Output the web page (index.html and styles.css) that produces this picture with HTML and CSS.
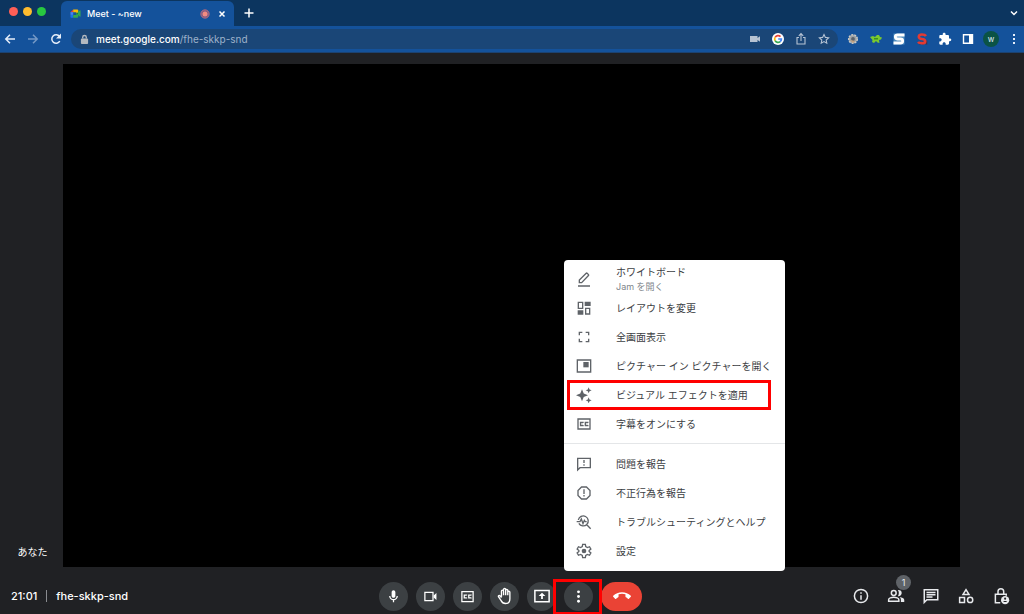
FILE: index.html
```html
<!DOCTYPE html>
<html lang="ja">
<head>
<meta charset="utf-8">
<title>Meet - ~new</title>
<link rel="stylesheet" href="styles.css">
</head>
<body>
<header class="browser">
  <div class="tabstrip">
    <div class="lights">
      <button class="light light-close" aria-label="閉じる"></button>
      <button class="light light-min" aria-label="最小化"></button>
      <button class="light light-max" aria-label="最大化"></button>
    </div>
    <div class="tab">
      <svg class="favicon" viewBox="0 0 24 24"><path fill="#00832d" d="M13.5 12l3 3.5 4 2.500V6l-4 2.500z"/><path fill="#1a73e8" d="M1 15v4.500A1.500 1.500 0 0 0 2.500 21H7l1-3-1-3z"/><path fill="#ea4335" d="M7 3L1 9h6z"/><path fill="#4285f4" d="M1 9h6v6H1z"/><path fill="#34a853" d="M7 15v6h9a2 2 0 0 0 2-2v-4l-4-3v3z"/><path fill="#fbbc04" d="M7 3v6h7v3l4-3V5a2 2 0 0 0-2-2z"/><path fill="#34a853" d="M17 9l5-4a.8.8 0 0 1 1 .8v12.400a.8.8 0 0 1-1 .8l-5-4z"/></svg>
      <span class="tab-title">Meet - ~new</span>
      <svg class="rec" viewBox="0 0 12 12"><circle cx="6" cy="6" r="5" fill="#7d5a82" stroke="#c66f80"/><circle cx="6" cy="6" r="3" fill="#f28b82"/></svg>
      <button class="tab-close" aria-label="タブを閉じる"><svg viewBox="0 0 8 8"><path class="line" d="M1.500 1.500l5 5m0-5l-5 5"/></svg></button>
    </div>
    <button class="new-tab" aria-label="新しいタブ"><svg viewBox="0 0 10 10"><path class="line" d="M5 .5v9M.5 5h9"/></svg></button>
    <button class="tab-search" aria-label="タブを検索"><svg viewBox="0 0 8 8"><path class="line" d="M1 2.500l3 3 3-3"/></svg></button>
  </div>
  <div class="toolbar">
    <button class="tool" aria-label="戻る"><svg viewBox="0 0 16 16"><path class="line" d="M13 8H4m4-4.200L3.800 8 8 12.200"/></svg></button>
    <button class="tool tool-off" aria-label="進む"><svg viewBox="0 0 16 16"><path class="line" d="M3 8h9M8 3.800L12.200 8 8 12.200"/></svg></button>
    <button class="tool" aria-label="再読み込み"><svg viewBox="0 0 16 16"><path class="line" d="M11.800 10.200A4.300 4.300 0 1 1 11.500 5.300"/><path fill="currentColor" d="M13 2.500v5H8z"/></svg></button>
    <div class="omnibox">
      <svg class="lock" viewBox="0 0 10 12"><rect x="1" y="5" width="8" height="6" rx="1" fill="currentColor"/><path class="line" d="M3 5V3.500a2 2 0 0 1 4 0V5"/></svg>
      <span class="url" role="textbox" aria-label="アドレス"><b class="host">meet.google.com</b>/fhe-skkp-snd</span>
      <button class="tool tool-soft" aria-label="カメラ"><svg viewBox="0 0 16 16"><path fill="currentColor" d="M3 5h7.500v2L13 5.300v5.400L10.500 9v2H3z"/></svg></button>
      <button class="tool" aria-label="Google"><svg viewBox="0 0 16 16"><circle cx="8" cy="8" r="6" fill="#fff"/><g fill="none" stroke-width="1.700"><path stroke="#ea4335" d="M5.100 6.300A3.400 3.400 0 0 1 10.500 5.600"/><path stroke="#fbbc04" d="M5.100 6.300a3.400 3.400 0 0 0 0 3.400"/><path stroke="#34a853" d="M5.100 9.700a3.400 3.400 0 0 0 5.100 1"/><path stroke="#4285f4" d="M10.200 10.700A3.400 3.400 0 0 0 11.400 8H8.200"/></g></svg></button>
      <button class="tool tool-soft" aria-label="共有"><svg viewBox="0 0 16 16"><path class="line thin" d="M6 6.500H4v6.500h8V6.500h-2M8 10V2.800M5.800 4.800L8 2.600l2.200 2.200"/></svg></button>
      <button class="tool tool-soft" aria-label="ブックマーク"><svg viewBox="0 0 16 16"><path class="line thin" d="M8 3.500l1.400 2.900 3.200.4-2.400 2.200.6 3.200L8 10.600l-2.800 1.600.6-3.200-2.400-2.200 3.200-.4z"/></svg></button>
    </div>
    <button class="tool" aria-label="拡張機能 1"><svg viewBox="0 0 16 16"><circle cx="8" cy="8" r="4.300" fill="#9da3a8" stroke="#c9c8c4" stroke-width="1.500" stroke-dasharray="2 1"/><circle cx="8" cy="8" r="1.900" fill="#59616a"/><path fill="#c7a17c" d="M5 9l3 3 2-2z"/></svg></button>
    <button class="tool" aria-label="拡張機能 2"><svg viewBox="0 0 16 16"><path fill="#7ac92f" d="M2 6l3-1 2 1 2-2h2l1 2 2 .5-1 2-2 .5.500 3-2-.5-1.500-1.500L6 12l-2-1 .5-2z"/><path fill="#3b8f22" d="M6 7h4v1.500H6z"/></svg></button>
    <button class="tool" aria-label="拡張機能 3"><svg viewBox="0 0 16 16"><rect x="2.500" y="2.500" width="11" height="11" fill="#4f8dbf"/><path fill="none" stroke="#fff" stroke-width="2.800" d="M13.500 4H6.500Q4.300 4 4.300 5.800T6.500 8h3q2.200 0 2.200 2T9.500 12H2.500"/></svg></button>
    <button class="tool" aria-label="拡張機能 4"><svg viewBox="0 0 16 16"><path stroke="#512d43" stroke-width="1.500" d="M6 13.500v-3m3 3.500v-3.500m3.500 3v-4"/><path fill="none" stroke="#e33a32" stroke-width="2.600" d="M12 5Q11 3.500 8 3.500T4.800 5.600 8 8t3.200 2.300T8 12.300 4 11"/></svg></button>
    <button class="tool tool-white" aria-label="拡張機能"><svg viewBox="-2 -2 28 28"><path fill="currentColor" d="M20.500 11H19V7c0-1.100-.9-2-2-2h-4V3.500C13 2.120 11.880 1 10.500 1S8 2.120 8 3.500V5H4c-1.100 0-1.990.9-1.990 2v3.800H3.500c1.490 0 2.700 1.210 2.700 2.700s-1.210 2.700-2.700 2.700H2V20c0 1.100.9 2 2 2h3.800v-1.500c0-1.490 1.210-2.700 2.700-2.700 1.490 0 2.700 1.210 2.700 2.700V22H17c1.100 0 2-.9 2-2v-4h1.500c1.380 0 2.500-1.120 2.500-2.500S21.880 11 20.500 11z"/></svg></button>
    <button class="tool tool-white" aria-label="サイドパネル"><svg viewBox="0 0 16 16"><path fill="currentColor" fill-rule="evenodd" d="M2.800 3h10.400v10H2.800zM4.200 4.400v7.200h4.800V4.400z"/></svg></button>
    <button class="tool avatar" aria-label="プロフィール">w</button>
    <button class="tool" aria-label="メニュー"><svg viewBox="0 0 16 16"><path fill="currentColor" d="M7 3h2v2H7zM7 7h2v2H7zM7 11h2v2H7z"/></svg></button>
  </div>
</header>

<main class="stage">
  <span class="self-name">あなた</span>
  <div class="video"></div>
</main>

<footer class="controls">
  <div class="meeting"><time>21:01</time><span class="bar"></span><span>fhe-skkp-snd</span></div>
  <div class="calls">
    <button class="round" aria-label="マイク"><svg viewBox="0 0 24 24"><path fill="currentColor" d="M12 14c1.660 0 3-1.340 3-3V5c0-1.660-1.340-3-3-3S9 3.340 9 5v6c0 1.660 1.340 3 3 3zm5-3c0 2.760-2.240 5-5 5s-5-2.240-5-5H5c0 3.530 2.610 6.430 6 6.920V21h2v-3.080c3.390-.49 6-3.390 6-6.920z"/></svg></button>
    <button class="round" aria-label="カメラ"><svg viewBox="0 0 24 24"><path class="stroke" d="M3 5.500h13v13H3z"/><path fill="currentColor" d="M17 10.500l4.500-4.200v11.400L17 13.500z"/></svg></button>
    <button class="round" aria-label="字幕"><svg viewBox="0 0 24 24"><path class="stroke" d="M3 4h18v16H3zM10.500 10.500V9.700H6.800v4.600h3.700v-.8M17.700 10.500V9.700H14v4.600h3.700v-.8"/></svg></button>
    <button class="round" aria-label="挙手"><svg class="big" viewBox="0 0 24 24"><path class="stroke hand" d="M7.300 13V5.500a1.400 1.400 0 0 1 2.800 0V11m0-6.500V3.300a1.400 1.400 0 0 1 2.800 0V11m0-6.500a1.400 1.400 0 0 1 2.800 0V11m0-4a1.400 1.400 0 0 1 2.800 0v8.500c0 4-2.300 6.500-5.900 6.500-3.200 0-4.700-1.400-6-4.200L3.300 13c-.5-1.500 1.200-2.300 2.200-1.200L7.300 14.200"/></svg></button>
    <button class="round" aria-label="画面を共有"><svg class="big" viewBox="0 0 24 24"><path class="stroke" d="M2.500 4.500h19v15h-19z"/><path fill="currentColor" d="M12 7.500l4.500 4.500h-3.300v4h-2.400v-4H7.500z"/></svg></button>
    <div class="more">
      <button class="round" aria-label="その他のオプション" aria-expanded="true"><svg viewBox="0 0 24 24"><circle cx="12" cy="4.500" r="2.300" fill="currentColor"/><circle cx="12" cy="12" r="2.300" fill="currentColor"/><circle cx="12" cy="19.500" r="2.300" fill="currentColor"/></svg></button>
      <span class="mark mark-more"></span>
      <div class="menu" role="menu">
        <button class="item" role="menuitem"><svg viewBox="0 0 24 24"><path class="stroke" d="M5 17.500v-3.800L15.300 3.400q.7-.7 1.400 0l2 2q.7.7 0 1.400L8.500 17.500zM3 22.500h18"/></svg><span class="label">ホワイトボード<small class="note">Jam を開く</small></span></button>
        <button class="item" role="menuitem"><svg viewBox="0 0 24 24"><path class="stroke" d="M3.500 3.500h6.500v9H3.500zM14.500 12.500h6v8.500h-6z"/><path fill="currentColor" d="M13 2.500h9V9h-9zM2.500 15.500h8.500V22H2.500z"/></svg><span class="label">レイアウトを変更</span></button>
        <button class="item" role="menuitem"><svg viewBox="0 0 24 24"><path class="stroke" d="M5 9.500V5h4.500M14.500 5H19v4.500M19 14.500V19h-4.500M9.500 19H5v-4.500"/></svg><span class="label">全画面表示</span></button>
        <button class="item" role="menuitem"><svg viewBox="0 0 24 24"><path class="stroke" d="M2 3h20v18H2z"/><path fill="currentColor" d="M11 6h8v8h-8z"/></svg><span class="label">ピクチャー イン ピクチャーを開く</span></button>
        <button class="item" role="menuitem"><svg viewBox="0 0 24 24"><path fill="currentColor" d="M9 3.500l2.600 6.400L18 12.500l-6.400 2.600L9 21.500l-2.600-6.400L0 12.500l6.400-2.600zM19 .5l1.300 3.200L23.500 5l-3.200 1.300L19 9.500l-1.300-3.200L14.500 5l3.200-1.300zM19 15.500l1.300 3.200 3.200 1.300-3.200 1.300L19 24.500l-1.300-3.200-3.200-1.300 3.200-1.300z"/></svg><span class="label">ビジュアル エフェクトを適用</span><span class="mark mark-item"></span></button>
        <button class="item" role="menuitem"><svg viewBox="0 0 24 24"><path class="stroke" d="M3 4.500h18v15H3zM10.500 10.500V9.700H6.800v4.600h3.700v-.8M17.700 10.500V9.700H14v4.600h3.700v-.8"/></svg><span class="label">字幕をオンにする</span></button>
        <hr class="rule">
        <button class="item" role="menuitem"><svg viewBox="0 0 24 24"><path class="stroke" d="M2.500 21V3.500h19v14H6zM12 6v4.500M12 12.500v2.200"/></svg><span class="label">問題を報告</span></button>
        <button class="item" role="menuitem"><svg viewBox="0 0 24 24"><path class="stroke" d="M8.300 3h7.400L21 8.300v7.400L15.700 21H8.300L3 15.700V8.300zM12 6.500v7M12 15v2.300"/></svg><span class="label">不正行為を報告</span></button>
        <button class="item" role="menuitem"><svg viewBox="0 0 24 24"><path class="stroke" d="M3.500 9a7.500 7.500 0 1 1 .8 5M15.800 15.800L22 22M1 11.500h5l2-4 2.500 7 2-5 1.300 2H16"/></svg><span class="label">トラブルシューティングとヘルプ</span></button>
        <button class="item" role="menuitem"><svg viewBox="0 0 24 24"><path class="stroke" d="M10 2h4l.6 3.400 2.500 1.400 3.200-1.200 2 3.500-2.600 2.200v1.400l2.600 2.200-2 3.500-3.200-1.200-2.500 1.400L14 22h-4l-.6-3.400-2.500-1.400-3.200 1.200-2-3.500 2.600-2.200v-1.400L1.700 9.100l2-3.500 3.200 1.200 2.500-1.400z"/><circle cx="12" cy="12" r="3.500" fill="currentColor"/></svg><span class="label">設定</span></button>
      </div>
    </div>
    <button class="round hangup" aria-label="通話から退出"><svg class="big" viewBox="0 0 24 24"><path fill="currentColor" d="M12 9c-1.600 0-3.150.25-4.600.72v3.100c0 .39-.23.74-.56.9-.98.49-1.870 1.120-2.660 1.850-.18.18-.43.28-.7.28-.28 0-.53-.11-.71-.29L.29 13.080c-.18-.17-.29-.42-.29-.7 0-.28.11-.53.29-.71C3.340 8.780 7.460 7 12 7s8.660 1.780 11.710 4.670c.18.18.29.43.29.71 0 .28-.11.53-.29.71l-2.480 2.480c-.18.18-.43.29-.71.29-.27 0-.52-.11-.7-.28-.79-.74-1.680-1.360-2.660-1.850-.33-.16-.56-.5-.56-.9v-3.100C15.150 9.250 13.600 9 12 9z"/></svg></button>
  </div>
  <div class="panels">
    <button class="panel" aria-label="ミーティングの詳細"><svg viewBox="0 0 24 24"><circle class="stroke" cx="12" cy="12" r="8.800"/><path class="stroke" d="M12 11v6M12 7v2"/></svg></button>
    <button class="panel" aria-label="全員を表示"><svg viewBox="0 0 24 24"><circle class="stroke" cx="9" cy="8" r="3.200"/><path class="stroke" d="M2.200 19v-2c0-2 4-3.200 6.800-3.200s6.800 1.200 6.800 3.200v2z"/><path fill="currentColor" d="M14.500 4a4.200 4.200 0 1 1 0 8.200c1.700-2.500 1.700-5.700 0-8.200zM17 13.200c3 .5 6 1.700 6 4V20h-4.500v-3c0-1.600-.5-2.800-1.500-3.800z"/></svg><span class="badge">1</span></button>
    <button class="panel" aria-label="チャット"><svg viewBox="0 0 24 24"><path class="stroke" d="M3 20.500V3.500h18v13.500H6.500zM6 7.300h12M6 10.300h12M6 13.300h8"/></svg></button>
    <button class="panel" aria-label="アクティビティ"><svg viewBox="0 0 24 24"><path class="stroke" d="M12 3.500l4 6.500H8zM3.500 14h6.500v6.500H3.500z"/><circle class="stroke" cx="17.500" cy="17.200" r="3.500"/></svg></button>
    <button class="panel" aria-label="主催者用ボタン"><svg viewBox="0 0 24 24"><path class="stroke" d="M11 21H4.500V9.500h14.500v2M8 9V6a3.800 3.800 0 0 1 7.600 0v3"/><circle cx="17.500" cy="17.500" r="5.500" fill="currentColor"/><circle cx="17.500" cy="15.500" r="1.400" fill="#202124"/><path fill="#202124" d="M14.800 20c.5-2 4.900-2 5.400 0z"/></svg></button>
  </div>
</footer>
</body>
</html>
```

FILE: styles.css
```css
* { box-sizing: border-box; }

body {
  margin: 0;
  height: 100vh;
  display: flex;
  flex-direction: column;
  overflow: hidden;
  background: #202124;
  color: #fff;
  font-family: Inter, "Noto Sans CJK JP", sans-serif;
}

button {
  border: 0;
  padding: 0;
  background: none;
  color: inherit;
  font: inherit;
  display: flex;
  align-items: center;
  justify-content: center;
}

svg { display: block; flex: none; }

.line { fill: none; stroke: currentColor; stroke-width: 1.5; }
.thin { stroke-width: 1.1; }
.stroke { fill: none; stroke: currentColor; stroke-width: 2; }
.hand { stroke-width: 1.8; }

/* Browser frame */
.browser { border-bottom: 1px solid #1c4270; }

.tabstrip {
  height: 26px;
  display: flex;
  align-items: center;
  padding: 0 6px 0 9px;
  background: #0c355f;
}

.lights { display: flex; gap: 5px; padding-bottom: 3px; }
.light { width: 9px; height: 9px; border-radius: 50%; }
.light-close { background: #ff5f57; }
.light-min { background: #febc2e; }
.light-max { background: #28c840; }

.tab {
  width: 173px;
  height: 25px;
  align-self: flex-end;
  margin-left: 15px;
  padding: 0 6px 0 9px;
  display: flex;
  align-items: center;
  gap: 6px;
  border-radius: 6px 6px 0 0;
  background: #14529b;
}

.favicon { width: 11px; height: 11px; }
.tab-title { flex: 1; font-size: 9px; font-weight: 500; line-height: 12px; }
.rec { width: 10px; height: 10px; }
.tab-close svg { width: 8px; height: 8px; }
.tab-close { width: 12px; height: 12px; }
.new-tab { margin-left: 9px; width: 12px; height: 12px; }
.new-tab svg { width: 10px; height: 10px; }
.tab-search { margin-left: auto; }
.tab-search svg { width: 8px; height: 8px; }

.toolbar {
  height: 26px;
  display: flex;
  align-items: center;
  gap: 7px;
  padding: 0 2px;
  background: #14529b;
}

.tool { width: 16px; height: 16px; flex: none; color: #e6eefa; }
.tool svg { width: 16px; height: 16px; }
.tool-off { color: #7599c6; }
.tool-soft { color: #b6c3d3; }
.tool-white { color: #fff; }
.avatar { border-radius: 50%; background: #0b5345; font-size: 8px; line-height: 12px; }

.omnibox {
  flex: 1;
  height: 20px;
  display: flex;
  align-items: center;
  gap: 7px;
  padding: 0 6px 0 9px;
  border-radius: 10px;
  background: #1a4677;
}

.lock { width: 9px; height: 11px; color: #b4b9bf; }
.url { flex: 1; font-size: 10px; line-height: 16px; color: #9eb2ca; }
.host { font-weight: 500; color: #fff; }

/* Call area */
.stage {
  flex: 1;
  display: grid;
  grid-template-columns: 63px 1fr;
  align-items: end;
  padding: 11px 64px 0 0;
}

.self-name { justify-self: center; padding: 0 0 7px 2px; font-size: 10px; line-height: 16px; }
.video { align-self: stretch; background: #000; }

/* Bottom bar */
.controls {
  height: 47px;
  display: grid;
  grid-template-columns: 1fr auto 1fr;
  align-items: center;
  padding: 11px 14px 0 11px;
}

.meeting {
  display: flex;
  align-items: center;
  gap: 9px;
  font-size: 11px;
  font-weight: 500;
  line-height: 16px;
}

.bar { width: 1px; height: 12px; background: #8a8c90; }

.calls { display: flex; gap: 8px; }
.round { width: 29px; height: 29px; border-radius: 50%; background: #3c4043; }
.round svg { width: 15px; height: 15px; }
.round .big { width: 18px; height: 18px; }
.hangup { width: 41px; border-radius: 15px; background: #ea4335; }

.panels { display: flex; justify-content: flex-end; gap: 17px; color: #e8eaed; }
.panel { position: relative; width: 18px; height: 18px; }
.panel svg { width: 18px; height: 18px; }

.badge {
  position: absolute;
  left: 9px;
  top: -12px;
  width: 15px;
  height: 15px;
  border-radius: 50%;
  background: #5f6368;
  font-size: 9px;
  line-height: 15px;
}

/* Options menu */
.more { position: relative; }

.menu {
  position: absolute;
  left: 0;
  bottom: 40px;
  width: 221px;
  padding: 5px 0;
  border-radius: 4px;
  background: #fff;
  color: #3c4043;
}

.item {
  position: relative;
  width: 100%;
  height: 29px;
  justify-content: flex-start;
  gap: 24px;
  padding-left: 12px;
  text-align: left;
}

.item svg { width: 16px; height: 16px; color: #5f6368; }
.label { font-size: 10px; line-height: 15px; white-space: nowrap; }
.note { display: block; font-size: 9px; line-height: 14px; color: #80868b; }
.rule { height: 1px; margin: 4px 0 6px; border: 0; background: #e4e6e8; }

/* Red call-out frames */
.mark { position: absolute; border: 3px solid #f00; pointer-events: none; }
.mark-more { left: -11px; top: -3px; width: 49px; height: 36px; }
.mark-item { left: 3px; top: -1px; width: 204px; height: 30px; }
```
